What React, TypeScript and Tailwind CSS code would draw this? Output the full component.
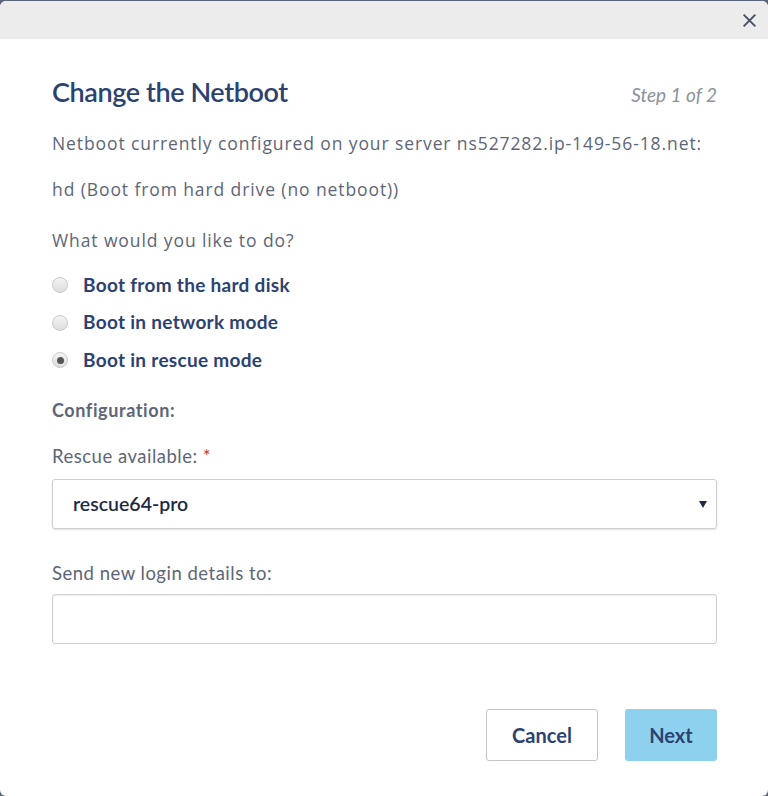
import React from 'react';

const options = [
  { label: 'Boot from the hard disk', checked: false },
  { label: 'Boot in network mode', checked: false },
  { label: 'Boot in rescue mode', checked: true },
];

function Radio({ checked }: { checked: boolean }) {
  return (
    <span className="w-4 h-4 rounded-full border border-[#c9c9c9] bg-gradient-to-b from-[#f4f4f4] to-[#dedede] flex items-center justify-center shrink-0">
      {checked && <span className="w-[7px] h-[7px] rounded-full bg-[#555]" />}
    </span>
  );
}

export default function App() {
  return (
    <div className="h-[796px] w-[768px] bg-[#5b6579] pt-px overflow-hidden font-['Open_Sans',sans-serif]">
      <div className="h-[795px] bg-white rounded-md overflow-hidden flex flex-col">
        <div className="h-[38px] bg-[#ececec] flex items-center justify-end pr-[10px] shrink-0">
          <svg width="17" height="17" viewBox="0 0 16 16" className="text-[#4a5468]">
            <path d="M2.5 2.5 L13.5 13.5 M13.5 2.5 L2.5 13.5" stroke="currentColor" strokeWidth="1.9" />
          </svg>
        </div>

        <div className="px-[52px] pr-[51px] flex flex-col">
          <div className="flex items-baseline justify-between pt-[35px]">
            <h1 className="font-['Lato',sans-serif] text-[27px] font-semibold text-[#2c4270] tracking-[-0.4px] leading-[36px]">
              Change the Netboot
            </h1>
            <span className="font-['Lato',sans-serif] italic text-[19px] text-[#8c929c]">Step 1 of 2</span>
          </div>

          <p className="mt-[20px] text-[17.5px] tracking-[0.9px] text-[#5d6678] leading-[26px]">
            Netboot currently configured on your server ns527282.ip-149-56-18.net:
          </p>
          <p className="mt-[20px] text-[17.5px] tracking-[0.9px] text-[#5d6678] leading-[26px]">
            hd (Boot from hard drive (no netboot))
          </p>
          <p className="mt-[25px] text-[17.5px] tracking-[0.9px] text-[#5d6678] leading-[26px]">
            What would you like to do?
          </p>

          <div className="mt-[19px] flex flex-col gap-[11.5px]">
            {options.map((o) => (
              <label key={o.label} className="flex items-center gap-[15px] h-[26px]">
                <Radio checked={o.checked} />
                <span className="font-['Lato',sans-serif] text-[19px] font-bold text-[#2c4270] tracking-[0.3px]">
                  {o.label}
                </span>
              </label>
            ))}
          </div>

          <div className="mt-[24px] font-['Lato',sans-serif] text-[18px] font-bold text-[#5d6678] tracking-[0.6px] leading-[26px]">
            Configuration:
          </div>

          <div className="mt-[20px] font-['Lato',sans-serif] text-[18.5px] text-[#5d6678] tracking-[0.5px] leading-[26px]">
            Rescue available: <span className="text-[#b5472f]">*</span>
          </div>
          <div className="mt-[10px] h-[50px] border border-[#cfcfcf] rounded-[3px] shadow-[0_1px_2px_rgba(0,0,0,0.12)] flex items-center justify-between pl-[20px] pr-[8px]">
            <span className="font-['Lato',sans-serif] text-[19.5px] font-semibold text-[#1e2a45]">rescue64-pro</span>
            <svg width="10" height="10" viewBox="0 0 10 10">
              <path d="M1 2 H9 L5 9 Z" fill="#1e2a45" />
            </svg>
          </div>

          <div className="mt-[31px] font-['Lato',sans-serif] text-[18.5px] text-[#5d6678] tracking-[0.5px] leading-[26px]">
            Send new login details to:
          </div>
          <div className="mt-[8px] h-[50px] border border-[#cfcfcf] rounded-[3px] shadow-[inset_0_1px_2px_rgba(0,0,0,0.08)]" />

          <div className="mt-[65px] flex justify-end gap-[27px]">
            <button className="w-[112px] h-[52px] border border-[#c4c4c4] rounded-[3px] bg-white font-['Lato',sans-serif] text-[20px] font-bold text-[#2c4270]">
              Cancel
            </button>
            <button className="w-[92px] h-[52px] rounded-[3px] bg-[#8ed1ef] font-['Lato',sans-serif] text-[20px] font-bold text-[#2c4270]">
              Next
            </button>
          </div>
        </div>
      </div>
    </div>
  );
}
